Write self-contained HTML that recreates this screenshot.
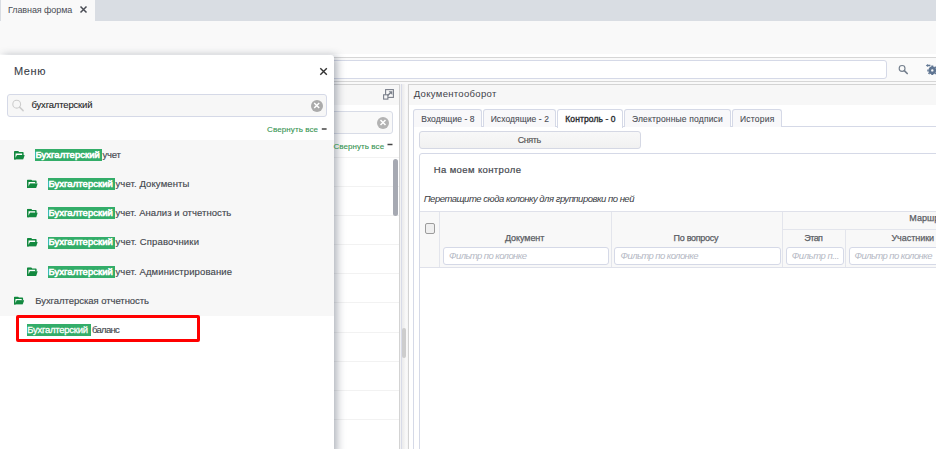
<!DOCTYPE html>
<html><head><meta charset="utf-8">
<style>
*{box-sizing:border-box;margin:0;padding:0}
html,body{width:936px;height:449px;overflow:hidden;background:#f9f9f9;font-family:"Liberation Sans",sans-serif;position:relative}
.a{position:absolute}
svg.ov{position:absolute;left:0;top:0}
svg text{font-family:"Liberation Sans",sans-serif;white-space:pre}
</style></head>
<body>
<!-- top bar -->
<div class="a" style="left:0;top:0;width:936px;height:21px;background:#d9dde3"></div>
<div class="a" style="left:1px;top:0;width:94px;height:21px;background:#f9f9f9"></div>
<!-- toolbar -->
<div class="a" style="left:0;top:54px;width:936px;height:3px;background:#fff"></div>
<div class="a" style="left:0;top:58px;width:936px;height:23px;background:#fafafa"></div>
<div class="a" style="left:0;top:57px;width:936px;height:1px;background:#d6d6d6"></div>
<div class="a" style="left:0;top:81px;width:936px;height:1px;background:#d6d6d6"></div>
<div class="a" style="left:300px;top:60px;width:587px;height:19px;background:#fff;border:1px solid #d5d9e7;border-radius:3px"></div>
<!-- left panel -->
<div class="a" style="left:150px;top:84px;width:250px;height:380px;background:#fff;border-top:1px solid #d3d3d3;border-right:1px solid #d3d3d3"></div>
<div class="a" style="left:150px;top:85px;width:249px;height:20px;background:#f7f7f7"></div>
<div class="a" style="left:200px;top:111px;width:193px;height:23px;background:#f9f9f9;border:1px solid #d8dce7;border-radius:3px"></div>
<div class="a" style="left:377px;top:116.5px;width:12px;height:12px;border-radius:50%;background:#b3b3b3"></div>
<!-- row lines -->
<div class="a" style="left:150px;top:157px;width:249px;height:1px;background:#f2f2f2"></div>
<div class="a" style="left:150px;top:186px;width:249px;height:1px;background:#f2f2f2"></div>
<div class="a" style="left:150px;top:215px;width:249px;height:1px;background:#f2f2f2"></div>
<div class="a" style="left:150px;top:244px;width:249px;height:1px;background:#f2f2f2"></div>
<div class="a" style="left:150px;top:273px;width:249px;height:1px;background:#f2f2f2"></div>
<div class="a" style="left:150px;top:302px;width:249px;height:1px;background:#f2f2f2"></div>
<div class="a" style="left:150px;top:332px;width:249px;height:1px;background:#f2f2f2"></div>
<div class="a" style="left:150px;top:361px;width:249px;height:1px;background:#f2f2f2"></div>
<div class="a" style="left:150px;top:390px;width:249px;height:1px;background:#f2f2f2"></div>
<div class="a" style="left:150px;top:419px;width:249px;height:1px;background:#f2f2f2"></div>
<div class="a" style="left:393px;top:159px;width:5px;height:57px;border-radius:2.5px;background:#a6a9b2"></div>
<!-- splitter scrollbar -->
<div class="a" style="left:400px;top:84px;width:8px;height:365px;background:linear-gradient(to right,#f2f2f2 0,#f2f2f2 1px,#d8dbe8 1px,#d8dbe8 2px,#ececec 2px,#f0f0f0 4px,#fafafa 6px,#f4f4f4 8px)"></div>
<div class="a" style="left:402px;top:328px;width:4px;height:30px;border-radius:2px;background:#cdcdcd"></div>
<!-- right panel -->
<div class="a" style="left:408px;top:84px;width:540px;height:380px;background:#fff;border-top:1px solid #d3d3d3;border-left:1px solid #d3d3d3"></div>
<div class="a" style="left:409px;top:85px;width:540px;height:20px;background:#f7f7f7"></div>
<!-- tab content border -->
<div class="a" style="left:413px;top:126px;width:540px;height:340px;border-top:1px solid #d5d9e7;border-left:1px solid #d5d9e7"></div>
<!-- tabs -->
<div class="a" style="left:413px;top:109px;width:69px;height:18px;background:#f8f8fa;border:1px solid #d5d9e7;border-bottom:none;border-radius:3px 3px 0 0"></div>
<div class="a" style="left:483px;top:109px;width:73px;height:18px;background:#f8f8fa;border:1px solid #d5d9e7;border-bottom:none;border-radius:3px 3px 0 0"></div>
<div class="a" style="left:557px;top:109px;width:66px;height:19px;background:#fff;border:1px solid #d5d9e7;border-bottom:none;border-radius:3px 3px 0 0"></div>
<div class="a" style="left:624px;top:109px;width:107px;height:18px;background:#f8f8fa;border:1px solid #d5d9e7;border-bottom:none;border-radius:3px 3px 0 0"></div>
<div class="a" style="left:732px;top:109px;width:50px;height:18px;background:#f8f8fa;border:1px solid #d5d9e7;border-bottom:none;border-radius:3px 3px 0 0"></div>
<!-- button -->
<div class="a" style="left:419px;top:131px;width:222px;height:18px;background:linear-gradient(#f8f8f8,#f1f1f1);border:1px solid #d5d8e4;border-radius:3px"></div>
<!-- content box -->
<div class="a" style="left:419px;top:153px;width:540px;height:320px;background:#fff;border:1px solid #d5d9e7;border-radius:3px"></div>
<!-- table -->
<div class="a" style="left:420px;top:211px;width:520px;height:57px;background:#f8f8f8;border-top:1px solid #dfe1ea;border-bottom:1px solid #dfe1ea"></div>
<div class="a" style="left:439px;top:212px;width:1px;height:55px;background:#e3e5ec"></div>
<div class="a" style="left:611px;top:212px;width:1px;height:55px;background:#e3e5ec"></div>
<div class="a" style="left:782px;top:212px;width:1px;height:55px;background:#e3e5ec"></div>
<div class="a" style="left:845px;top:230px;width:1px;height:37px;background:#e3e5ec"></div>
<div class="a" style="left:783px;top:229px;width:160px;height:1px;background:#e3e5ec"></div>
<div class="a" style="left:425px;top:223px;width:10px;height:11px;background:#efefef;border:1px solid #9c9c9c;border-radius:2px"></div>
<div class="a" style="left:443px;top:247px;width:166px;height:18px;background:#fff;border:1px solid #d5d9e7;border-radius:3px"></div>
<div class="a" style="left:614px;top:247px;width:167px;height:18px;background:#fff;border:1px solid #d5d9e7;border-radius:3px"></div>
<div class="a" style="left:786px;top:247px;width:58px;height:18px;background:#fff;border:1px solid #d5d9e7;border-radius:3px"></div>
<div class="a" style="left:849px;top:247px;width:100px;height:18px;background:#fff;border:1px solid #d5d9e7;border-radius:3px"></div>
<!-- menu -->
<div class="a" style="left:0;top:55px;width:333.7px;height:400px;background:#fff;border-radius:0 3px 0 0;box-shadow:3px 1px 9px rgba(40,50,70,.38)"></div>
<div class="a" style="left:7px;top:94px;width:320px;height:23px;background:#f7f7f7;border:1px solid #d5d9e7;border-radius:3px"></div>
<div class="a" style="left:310.7px;top:99.5px;width:12px;height:12px;border-radius:50%;background:#ababab"></div>
<div class="a" style="left:0;top:140px;width:333.7px;height:176px;background:#f7f7f7"></div>
<!-- highlights -->
<div class="a" style="left:35px;top:149px;width:67px;height:12px;background:#33ad69"></div>
<div class="a" style="left:48px;top:178px;width:67px;height:12px;background:#33ad69"></div>
<div class="a" style="left:48px;top:207px;width:67px;height:12px;background:#33ad69"></div>
<div class="a" style="left:48px;top:236.5px;width:67px;height:12px;background:#33ad69"></div>
<div class="a" style="left:48px;top:266px;width:67px;height:12px;background:#33ad69"></div>
<div class="a" style="left:27px;top:324px;width:64px;height:12px;background:#33ad69"></div>
<div class="a" style="left:16px;top:315px;width:184px;height:27px;border:3px solid #ff0000;border-radius:2px"></div>

<svg class="ov" width="936" height="449" viewBox="0 0 936 449">
<defs>
<symbol id="fold" viewBox="0 0 11 9" preserveAspectRatio="none">
<path d="M0.9,0 H4.3 L5.3,1.1 H9 Q9.8,1.1 9.8,1.9 V4.2 H1.8 V8.8 H0.9 Q0,8.8 0,8 V0.9 Q0,0 0.9,0 Z" fill="#12893f"/>
<path d="M1.4,2.5 H8.3 V4.1 H3 L1.4,7.4 Z" fill="#fff"/>
<path d="M3,4 H11 L9.3,8.8 H0.6 Z" fill="#12893f"/>
<rect x="0" y="0.8" width="1.3" height="8" fill="#12893f"/>
</symbol>
</defs>
<!-- tab close x -->
<path d="M80.5,6.5 L86.5,12.5 M86.5,6.5 L80.5,12.5" stroke="#4a4d55" stroke-width="1.5"/>
<!-- menu close x -->
<path d="M320.3,68.3 L326.8,74.8 M326.8,68.3 L320.3,74.8" stroke="#333" stroke-width="1.4"/>
<!-- menu search icon -->
<circle cx="16.7" cy="104.2" r="3.9" fill="none" stroke="#cdcdcd" stroke-width="1.1"/>
<path d="M19.6,107.1 L23.1,110.6" stroke="#cdcdcd" stroke-width="1.5" stroke-linecap="round"/>
<!-- clear x icons -->
<path d="M314.2,103 L319.2,108 M319.2,103 L314.2,108" stroke="#fff" stroke-width="1.5"/>
<path d="M380.5,120 L385.5,125 M385.5,120 L380.5,125" stroke="#fff" stroke-width="1.5"/>
<!-- dashes -->
<path d="M321.8,129 H326.6" stroke="#444" stroke-width="1.5"/>
<path d="M387.5,144.5 H392.5" stroke="#444" stroke-width="1.5"/>
<!-- expand icon -->
<rect x="385.6" y="89.6" width="7.8" height="7.8" fill="none" stroke="#7a7f8a" stroke-width="1.1"/>
<rect x="383.6" y="94.8" width="4.3" height="4.3" fill="#f7f7f7" stroke="#7a7f8a" stroke-width="1.1"/>
<path d="M387.6,95.6 L390.8,92.4" fill="none" stroke="#7a7f8a" stroke-width="1.4"/><path d="M388.6,91.2 H392.3 V94.9 Z" fill="#7a7f8a"/>
<!-- toolbar search -->
<circle cx="902.1" cy="68.4" r="2.9" fill="none" stroke="#75808e" stroke-width="1.15"/>
<path d="M904.3,70.6 L907.2,73.5" stroke="#75808e" stroke-width="1.7" stroke-linecap="round"/>
<!-- gear -->
<g stroke="#5f7592" fill="none">
<circle cx="932.3" cy="70.4" r="2.5" stroke-width="2.6"/>
<path d="M932.3,65.6 V67 M932.3,73.8 V75 M927.3,70.4 H928.7 M928.6,73.9 L929.4,73.1 M935.9,66.9 L935.1,67.7 M935.9,73.9 L935.1,73.1" stroke-width="2"/>
<path d="M927.4,65.5 H930.4" stroke-width="1.6"/>
</g>
<path d="M925.8,65.5 L927.9,63.9 V67.1 Z" fill="#5f7592"/>
<!-- folders -->
<use href="#fold" x="14" y="151" width="10.8" height="8.8"/>
<use href="#fold" x="27" y="179.5" width="10.8" height="8.8"/>
<use href="#fold" x="27" y="208.8" width="10.8" height="8.8"/>
<use href="#fold" x="27" y="238" width="10.8" height="8.8"/>
<use href="#fold" x="27" y="267.3" width="10.8" height="8.8"/>
<use href="#fold" x="14" y="296.6" width="10.2" height="8.2"/>

<text x="8.00" y="13.00" font-size="9" font-weight="normal" font-style="normal" fill="#4a4d55" textLength="64.29" lengthAdjust="spacing">Главная форма</text>
<text x="13.90" y="75.00" font-size="11" font-weight="normal" font-style="normal" fill="#3a3e48" stroke="#3a3e48" stroke-width="0.1" textLength="31.60" lengthAdjust="spacing">Меню</text>
<text x="31.50" y="108.00" font-size="9.5" font-weight="normal" font-style="normal" fill="#1e1e1e" stroke="#1e1e1e" stroke-width="0.1" textLength="60.99" lengthAdjust="spacing">бухгалтерский</text>
<text x="267.10" y="132.00" font-size="8" font-weight="normal" font-style="normal" fill="#34934f" stroke="#34934f" stroke-width="0.1" textLength="50.90" lengthAdjust="spacing">Свернуть все</text>
<text x="35.40" y="158.00" font-size="9.5" font-weight="normal" font-style="normal" fill="#fff" stroke="#fff" stroke-width="0.6" textLength="64.49" lengthAdjust="spacing">Бухгалтерский</text>
<text x="102.50" y="158.00" font-size="9.5" font-weight="normal" font-style="normal" fill="#44474e" stroke="#44474e" stroke-width="0.15" textLength="18.36" lengthAdjust="spacing">учет</text>
<text x="48.40" y="187.00" font-size="9.5" font-weight="normal" font-style="normal" fill="#fff" stroke="#fff" stroke-width="0.6" textLength="64.49" lengthAdjust="spacing">Бухгалтерский</text>
<text x="115.50" y="187.00" font-size="9.5" font-weight="normal" font-style="normal" fill="#44474e" stroke="#44474e" stroke-width="0.15" textLength="73.83" lengthAdjust="spacing">учет. Документы</text>
<text x="48.40" y="216.00" font-size="9.5" font-weight="normal" font-style="normal" fill="#fff" stroke="#fff" stroke-width="0.6" textLength="64.49" lengthAdjust="spacing">Бухгалтерский</text>
<text x="115.50" y="216.00" font-size="9.5" font-weight="normal" font-style="normal" fill="#44474e" stroke="#44474e" stroke-width="0.15" textLength="115.75" lengthAdjust="spacing">учет. Анализ и отчетность</text>
<text x="48.40" y="245.00" font-size="9.5" font-weight="normal" font-style="normal" fill="#fff" stroke="#fff" stroke-width="0.6" textLength="64.49" lengthAdjust="spacing">Бухгалтерский</text>
<text x="115.50" y="245.00" font-size="9.5" font-weight="normal" font-style="normal" fill="#44474e" stroke="#44474e" stroke-width="0.15" textLength="83.45" lengthAdjust="spacing">учет. Справочники</text>
<text x="48.40" y="275.00" font-size="9.5" font-weight="normal" font-style="normal" fill="#fff" stroke="#fff" stroke-width="0.6" textLength="64.49" lengthAdjust="spacing">Бухгалтерский</text>
<text x="115.50" y="275.00" font-size="9.5" font-weight="normal" font-style="normal" fill="#44474e" stroke="#44474e" stroke-width="0.15" textLength="116.46" lengthAdjust="spacing">учет. Администрирование</text>
<text x="35.20" y="304.00" font-size="9.5" font-weight="normal" font-style="normal" fill="#44474e" stroke="#44474e" stroke-width="0.15" textLength="113.85" lengthAdjust="spacing">Бухгалтерская отчетность</text>
<text x="27.30" y="333.00" font-size="9.5" font-weight="normal" font-style="normal" fill="#fff" stroke="#fff" stroke-width="0.3" textLength="60.70" lengthAdjust="spacing">Бухгалтерский</text>
<text x="92.00" y="333.00" font-size="9.5" font-weight="normal" font-style="normal" fill="#44474e" stroke="#44474e" stroke-width="0.15" textLength="27.74" lengthAdjust="spacing">баланс</text>
<text x="333.50" y="149.00" font-size="8" font-weight="normal" font-style="normal" fill="#34934f" stroke="#34934f" stroke-width="0.1" textLength="50.58" lengthAdjust="spacing">Свернуть все</text>
<text x="413.75" y="97.00" font-size="9.5" font-weight="normal" font-style="normal" fill="#3e4148" textLength="82.60" lengthAdjust="spacing">Документооборот</text>
<text x="421.30" y="122.20" font-size="8.5" font-weight="normal" font-style="normal" fill="#4a4d55" stroke="#4a4d55" stroke-width="0.1" textLength="53.14" lengthAdjust="spacing">Входящие - 8</text>
<text x="490.70" y="122.20" font-size="8.5" font-weight="normal" font-style="normal" fill="#4a4d55" stroke="#4a4d55" stroke-width="0.1" textLength="58.24" lengthAdjust="spacing">Исходящие - 2</text>
<text x="565.30" y="122.20" font-size="8.5" font-weight="normal" font-style="normal" fill="#2a2c30" stroke="#2a2c30" stroke-width="0.35" textLength="50.29" lengthAdjust="spacing">Контроль - 0</text>
<text x="631.90" y="122.20" font-size="8.5" font-weight="normal" font-style="normal" fill="#4a4d55" stroke="#4a4d55" stroke-width="0.1" textLength="90.89" lengthAdjust="spacing">Электронные подписи</text>
<text x="740.00" y="122.20" font-size="8.5" font-weight="normal" font-style="normal" fill="#4a4d55" stroke="#4a4d55" stroke-width="0.1" textLength="34.37" lengthAdjust="spacing">История</text>
<text x="517.70" y="142.70" font-size="9" font-weight="normal" font-style="normal" fill="#555" stroke="#555" stroke-width="0.15" textLength="23.41" lengthAdjust="spacing">Снять</text>
<text x="433.70" y="172.80" font-size="9.5" font-weight="normal" font-style="normal" fill="#44474e" stroke="#44474e" stroke-width="0.2" textLength="87.26" lengthAdjust="spacing">На моем контроле</text>
<text x="423.70" y="202.00" font-size="9.5" font-weight="normal" font-style="italic" fill="#3a3d44" textLength="210.77" lengthAdjust="spacing">Перетащите сюда колонку для группировки по ней</text>
<text x="505.00" y="241.30" font-size="9" font-weight="normal" font-style="normal" fill="#5a5d64" stroke="#5a5d64" stroke-width="0.25" textLength="39.37" lengthAdjust="spacing">Документ</text>
<text x="673.60" y="240.90" font-size="9" font-weight="normal" font-style="normal" fill="#5a5d64" stroke="#5a5d64" stroke-width="0.25" textLength="44.88" lengthAdjust="spacing">По вопросу</text>
<text x="804.20" y="240.90" font-size="9" font-weight="normal" font-style="normal" fill="#5a5d64" stroke="#5a5d64" stroke-width="0.25" textLength="18.78" lengthAdjust="spacing">Этап</text>
<text x="891.40" y="240.90" font-size="9" font-weight="normal" font-style="normal" fill="#5a5d64" stroke="#5a5d64" stroke-width="0.25" textLength="42.66" lengthAdjust="spacing">Участники</text>
<text x="909.30" y="221.20" font-size="9" font-weight="normal" font-style="normal" fill="#5a5d64" stroke="#5a5d64" stroke-width="0.25" textLength="38.36" lengthAdjust="spacing">Маршрут</text>
<text x="449.00" y="258.80" font-size="9.5" font-weight="normal" font-style="italic" fill="#b4b8c4" textLength="77.93" lengthAdjust="spacing">Фильтр по колонке</text>
<text x="620.50" y="258.80" font-size="9.5" font-weight="normal" font-style="italic" fill="#b4b8c4" textLength="77.93" lengthAdjust="spacing">Фильтр по колонке</text>
<text x="791.70" y="258.80" font-size="9.5" font-weight="normal" font-style="italic" fill="#b4b8c4" textLength="47.68" lengthAdjust="spacing">Фильтр п...</text>
<text x="854.50" y="258.80" font-size="9.5" font-weight="normal" font-style="italic" fill="#b4b8c4" textLength="77.93" lengthAdjust="spacing">Фильтр по колонке</text>
</svg>
</body></html>
